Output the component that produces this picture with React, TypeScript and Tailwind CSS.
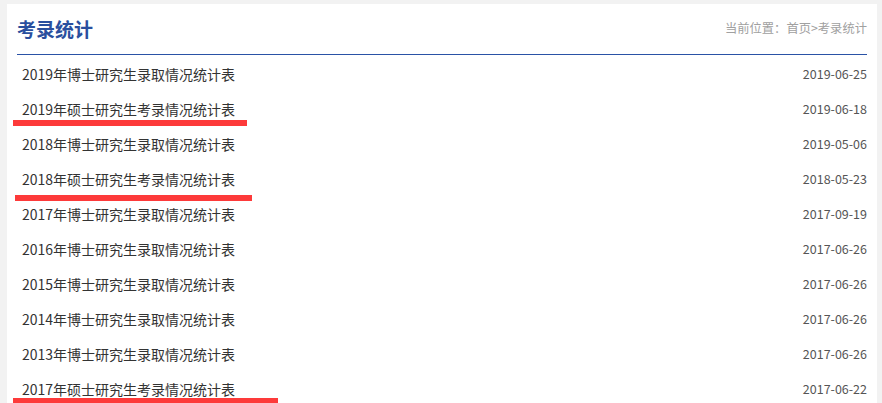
import { FC } from 'react'

const ROWS = [
    { title: '2019年博士研究生录取情况统计表', date: '2019-06-25' },
    { title: '2019年硕士研究生考录情况统计表', date: '2019-06-18' },
    { title: '2018年博士研究生录取情况统计表', date: '2019-05-06' },
    { title: '2018年硕士研究生考录情况统计表', date: '2018-05-23' },
    { title: '2017年博士研究生录取情况统计表', date: '2017-09-19' },
    { title: '2016年博士研究生录取情况统计表', date: '2017-06-26' },
    { title: '2015年博士研究生录取情况统计表', date: '2017-06-26' },
    { title: '2014年博士研究生录取情况统计表', date: '2017-06-26' },
    { title: '2013年博士研究生录取情况统计表', date: '2017-06-26' },
    { title: '2017年硕士研究生考录情况统计表', date: '2017-06-22' },
];

const App: FC = () => {
    return (
        <div className="relative h-[403px] w-[882px] overflow-hidden bg-[#f2f2f2] font-['Microsoft_YaHei','Noto_Sans_CJK_SC',sans-serif]">
            {/* White panel */}
            <div className="mt-[4px] ml-[7px] w-[870px] h-[399px] bg-white px-[10px]">
                {/* Header */}
                <div className="flex justify-between items-center h-[51px] pb-[1px] border-b border-[#2a52a6]">
                    <h2 className="text-[19px] font-bold text-[#2a4f9e] leading-none">考录统计</h2>
                    <div className="text-[12.3px] text-[#a0a0a0] leading-none">当前位置：首页&gt;考录统计</div>
                </div>

                {/* List */}
                <ul className="mt-[2px]">
                    {ROWS.map((row, i) => (
                        <li key={i} className="flex justify-between items-center h-[35px]">
                            <a className="pl-[5px] text-[14px] text-[#333] cursor-pointer">{row.title}</a>
                            <span className="text-[12.5px] text-[#555]">{row.date}</span>
                        </li>
                    ))}
                </ul>
            </div>

            {/* Red annotation marks */}
            <span className="absolute left-[13px] top-[120px] w-[234px] h-[6px] bg-[#fd3a3a]"></span>
            <span className="absolute left-[15px] top-[195px] w-[237px] h-[6px] bg-[#fd3a3a]"></span>
            <span className="absolute left-[13px] top-[398px] w-[265px] h-[6px] bg-[#fd3a3a]"></span>
        </div>
    );
};

export default App;
